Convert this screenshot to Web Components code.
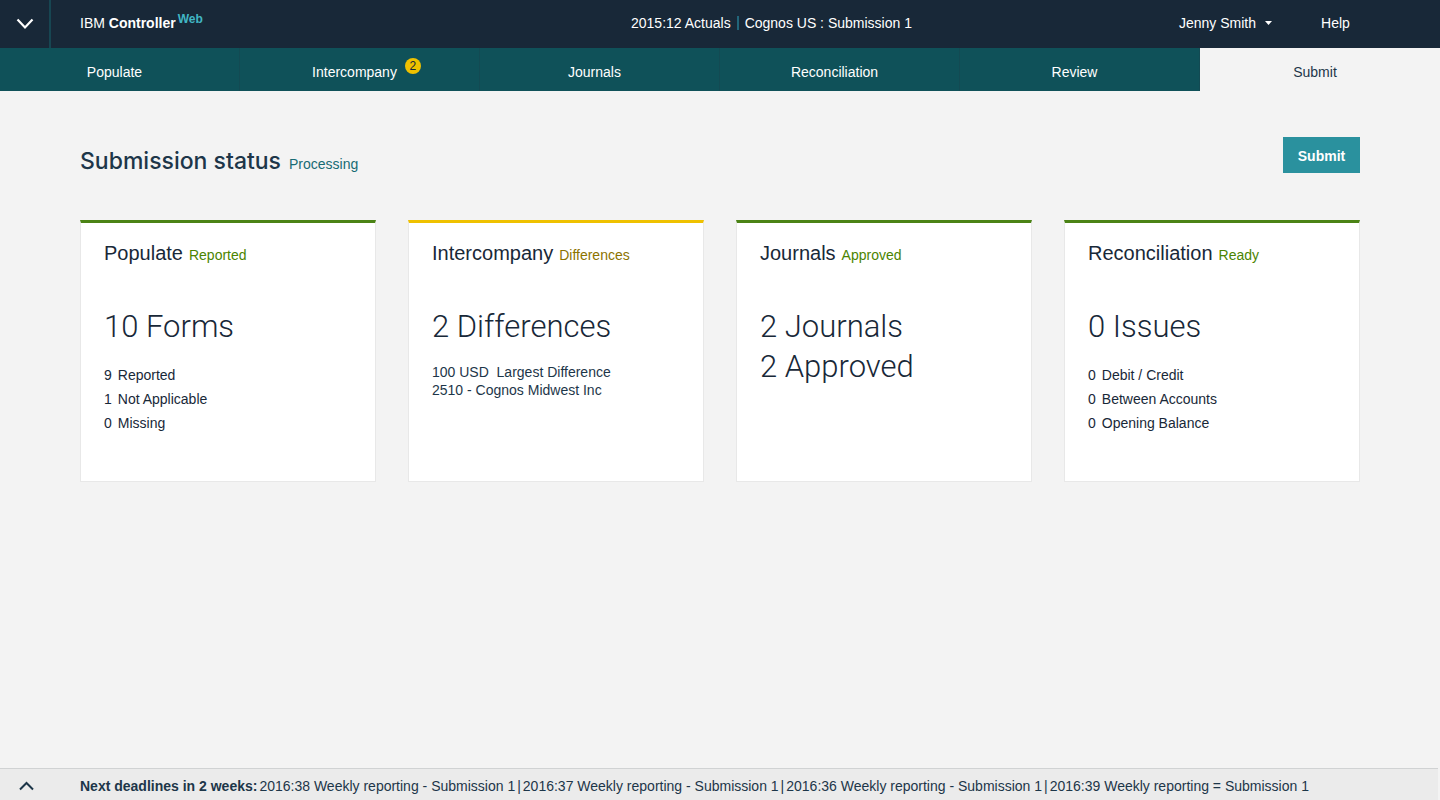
<!DOCTYPE html>
<html lang="en">
<head>
<meta charset="utf-8">
<meta name="viewport" content="width=device-width, initial-scale=1">
<title>IBM Controller Web</title>
<style>
  body {
    margin: 0;
    font: 14px/24px "Liberation Sans", Arial, sans-serif;
    color: #1a2a3a;
    background: #f3f3f3;
  }
</style>
</head>
<body>
<controller-app></controller-app>

<template id="app-header">
  <style>
    :host { display: flex; height: 48px; background: #182838; color: #fff; }
    * { box-sizing: border-box; }
    button { display: flex; align-items: center; padding: 0; border: 0; background: none; color: inherit; font: inherit; cursor: pointer; }
    .menu { width: 51px; justify-content: center; border-right: 2px solid #174652; }
    .bar { flex: 1; display: grid; grid-template-columns: 551fr 548fr 261fr; align-items: center; padding: 0 0 2px 29px; white-space: nowrap; }
    .brand { display: flex; gap: 2px; }
    .brand span { color: #41b6c4; font-size: 12px; line-height: 16px; font-weight: 700; }
    .context { display: flex; gap: 6px; align-items: center; }
    .context i { width: 2px; height: 14px; background: #21657a; }
    .account { display: flex; }
    .account button { gap: 9px; margin-right: 49px; }
    a { color: inherit; text-decoration: none; }
    svg { display: block; }
  </style>
  <button class="menu" aria-label="Open menu">
    <svg width="18" height="12" viewBox="0 0 18 12" fill="none" stroke="#fff" stroke-width="2.2"><path d="M1.5 1.5 9 9.5l7.500-8"/></svg>
  </button>
  <div class="bar">
    <div class="brand"><div>IBM <b>Controller</b></div><span>Web</span></div>
    <div class="context"><span>2015:12 Actuals</span><i></i><span>Cognos US : Submission 1</span></div>
    <div class="account">
      <button>Jenny Smith <svg width="7" height="4" viewBox="0 0 7 4"><path d="M0 0h7L3.500 4z" fill="#fff"/></svg></button>
      <a href="#help">Help</a>
    </div>
  </div>
</template>

<template id="nav-tab">
  <style>
    :host { display: block; border-right: 1px solid #134a53; }
    :host([current]) { background: #f3f3f3; color: #1d3649; border: 0; }
    a { display: flex; justify-content: center; align-items: center; height: 100%; box-sizing: border-box; padding: 5px 10px 0 0; color: inherit; text-decoration: none; }
    span { position: relative; }
    ::slotted([slot=badge]) { position: absolute; left: calc(100% + 8px); top: -2px; width: 16px; height: 16px; border-radius: 50%; background: #efc100; color: #182838; font-size: 12px; font-weight: 400; line-height: 16px; text-align: center; }
  </style>
  <a href="#"><span><slot></slot><slot name="badge"></slot></span></a>
</template>

<template id="status-card">
  <style>
    :host { --tone: #4b8400; --line: #4b8315; display: block; box-sizing: border-box; min-height: 262px; padding: 18px 23px; background: #fff; border: 1px solid #e8e8e8; border-top: 3px solid var(--line); color: #182838; }
    :host([tone=warning]) { --tone: #8c7300; --line: #efc100; }
    header { display: flex; align-items: baseline; gap: 6px; white-space: nowrap; }
    h2 { margin: 0; font-size: 20px; line-height: 24px; font-weight: 400; }
    header span { color: var(--tone); }
    .total { margin-top: 40px; font: 300 31px/40px Roboto, "Liberation Sans", sans-serif; }
    .details { margin-top: 16px; }
  </style>
  <header><h2></h2><span></span></header>
  <div class="total"><slot name="total"></slot></div>
  <div class="details"><slot></slot></div>
</template>

<template id="count-row">
  <style>
    :host { display: flex; gap: 6px; line-height: 24px; }
  </style>
  <slot name="count"></slot><slot></slot>
</template>

<template id="deadline-bar">
  <style>
    :host { display: flex; align-items: center; height: 32px; box-sizing: border-box; margin-right: 2px; padding-top: 2px; border-top: 1px solid #d0d2d3; background: #ebebeb; color: #1d3649; white-space: nowrap; }
    button { width: 80px; padding: 0 0 0 19px; border: 0; background: none; cursor: pointer; }
    svg { display: block; }
    ul { display: flex; margin: 0; padding: 0 0 0 2px; list-style: none; }
    li + li::before { content: "|"; margin: 0 2px; }
  </style>
  <button aria-label="Expand deadlines"><svg width="15" height="10" viewBox="0 0 15 10" fill="none" stroke="#1d3649" stroke-width="2"><path d="M1 8.500 7.500 2 14 8.500"/></svg></button>
  <b>Next deadlines in 2 weeks:</b>
  <ul>
    <li>2016:38 Weekly reporting - Submission 1</li>
    <li>2016:37 Weekly reporting - Submission 1</li>
    <li>2016:36 Weekly reporting - Submission 1</li>
    <li>2016:39 Weekly reporting = Submission 1</li>
  </ul>
</template>

<template id="controller-app">
  <style>
    :host { display: flex; flex-direction: column; min-height: 100vh; }
    nav { display: grid; grid-template-columns: repeat(6, 1fr); height: 43px; background: #0f5159; color: #fff; }
    main { flex: 1; padding: 46px 80px; }
    .heading { display: flex; justify-content: space-between; height: 36px; margin-bottom: 47px; }
    .title { display: flex; align-items: baseline; gap: 8px; padding-top: 10px; color: #1d3649; }
    h1 { margin: 0; font: 500 23px/28px Inter, "Liberation Sans", sans-serif; }
    .title span { color: #176b74; }
    .submit { width: 77px; padding: 2px 0 0; border: 0; background: #2a919e; color: #fff; font: inherit; font-weight: 700; cursor: pointer; }
    .cards { display: grid; grid-template-columns: repeat(4, 1fr); gap: 32px; }
    p { margin: 0; line-height: 18px; color: #1d3649; white-space: pre; }
  </style>
  <app-header></app-header>
  <nav aria-label="Steps">
    <nav-tab>Populate</nav-tab>
    <nav-tab>Intercompany<b slot="badge">2</b></nav-tab>
    <nav-tab>Journals</nav-tab>
    <nav-tab>Reconciliation</nav-tab>
    <nav-tab>Review</nav-tab>
    <nav-tab current>Submit</nav-tab>
  </nav>
  <main>
    <div class="heading">
      <div class="title"><h1>Submission status</h1><span>Processing</span></div>
      <button class="submit">Submit</button>
    </div>
    <div class="cards">
      <status-card name="Populate" status="Reported">
        <div slot="total">10 Forms</div>
        <count-row><span slot="count">9</span>Reported</count-row>
        <count-row><span slot="count">1</span>Not Applicable</count-row>
        <count-row><span slot="count">0</span>Missing</count-row>
      </status-card>
      <status-card name="Intercompany" status="Differences" tone="warning">
        <div slot="total">2 Differences</div>
        <p>100 USD  Largest Difference</p>
        <p>2510 - Cognos Midwest Inc</p>
      </status-card>
      <status-card name="Journals" status="Approved">
        <div slot="total">2 Journals</div>
        <div slot="total">2 Approved</div>
      </status-card>
      <status-card name="Reconciliation" status="Ready">
        <div slot="total">0 Issues</div>
        <count-row><span slot="count">0</span>Debit / Credit</count-row>
        <count-row><span slot="count">0</span>Between Accounts</count-row>
        <count-row><span slot="count">0</span>Opening Balance</count-row>
      </status-card>
    </div>
  </main>
  <deadline-bar></deadline-bar>
</template>

<script>
  class TemplateElement extends HTMLElement {
    constructor() {
      super();
      const template = document.getElementById(this.localName);
      this.attachShadow({ mode: "open" }).append(document.importNode(template.content, true));
    }
  }

  class StatusCard extends TemplateElement {
    connectedCallback() {
      this.shadowRoot.querySelector("h2").textContent = this.getAttribute("name");
      this.shadowRoot.querySelector("header span").textContent = this.getAttribute("status");
    }
  }

  customElements.define("app-header", class extends TemplateElement {});
  customElements.define("nav-tab", class extends TemplateElement {});
  customElements.define("count-row", class extends TemplateElement {});
  customElements.define("status-card", StatusCard);
  customElements.define("deadline-bar", class extends TemplateElement {});
  customElements.define("controller-app", class extends TemplateElement {});
</script>
</body>
</html>
